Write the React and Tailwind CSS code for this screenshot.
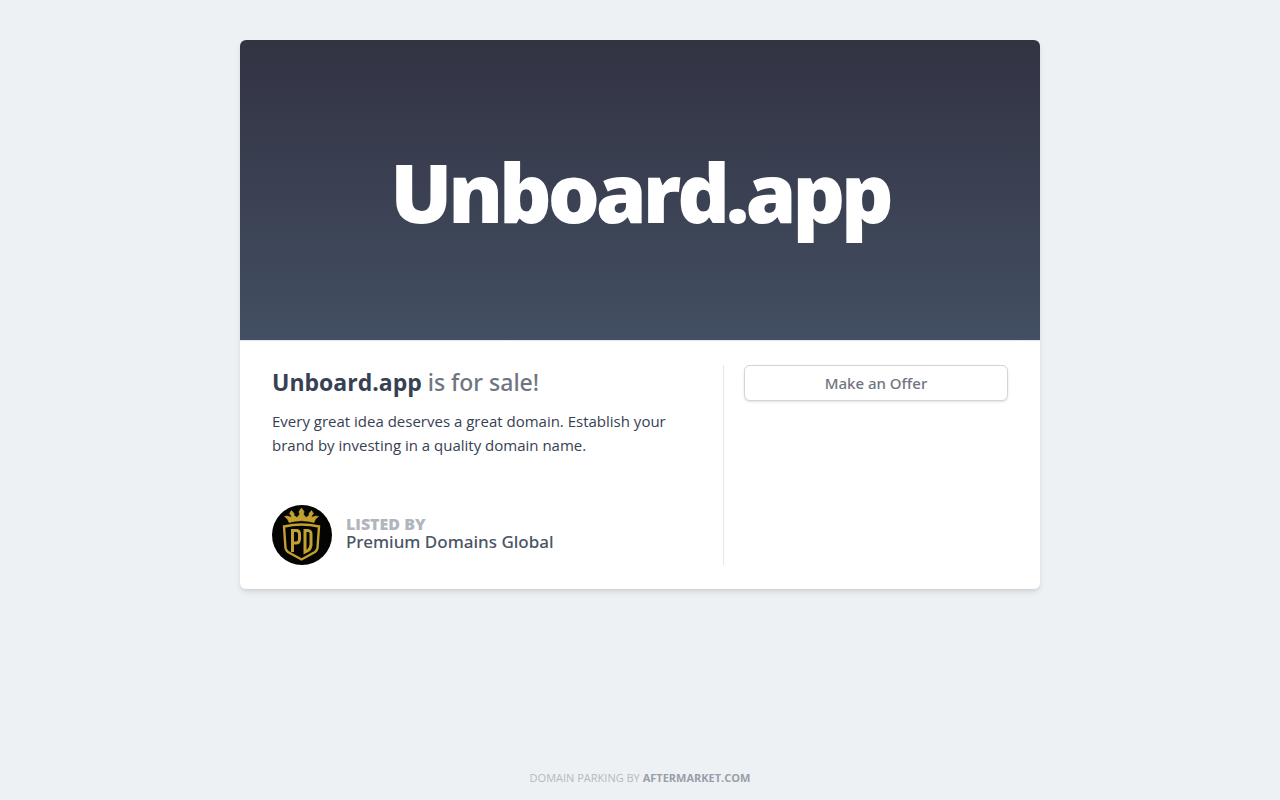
const SellerLogo = () => (
  <svg
    viewBox="0 0 60 60"
    className="w-15 h-15 rounded-full shrink-0"
    role="img"
    aria-label="Premium Domains Global"
  >
    <rect width="60" height="60" fill="#040403" />
    <path
      d="M17 17.500 L15.500 14 L12.500 11.500 L15.500 11 L19.500 12.500 L19 10.500 L17.500 8.500 L19.500 5.500 L22 8.500 L22 10.500 L25 12.500 L27.500 9.500 L27 6.500 L29.500 3 L32 6.500 L31.500 9.500 L34 12.500 L37 10.500 L37 8.500 L39.500 5.500 L41.500 8.500 L40 10.500 L39.500 12.500 L43.500 11 L46.500 11.500 L43.500 14 L42 17.500 Q29.500 14 17 17.500 Z"
      fill="#c2a12f"
      stroke="#c2a12f"
      strokeWidth="0.600"
      strokeLinejoin="round"
    />
    <g fill="none" stroke="#c2a12f">
      <path
        d="M12 21.500 Q29.500 17.500 47 21.500 L45.500 43 Q45 45.500 43 47 L29.500 54.500 L16 47 Q14 45.500 13.500 43 Z"
        strokeWidth="2.400"
      />
      <path
        d="M20.500 47 V25.500 H24 Q27.500 25.500 27.500 29 V34 Q27.500 38 24 38 H21"
        strokeWidth="3"
      />
      <path
        d="M33 25.500 H35.500 Q39.500 25.500 39 30 V40 Q38.500 44 36 45.500 L33 47 Z"
        strokeWidth="3"
      />
    </g>
  </svg>
);

const App = () => {
  return (
    <div className="flex flex-col items-center min-h-screen px-4 pt-10 bg-[#edf1f4] font-['Open_Sans','Noto_Sans',sans-serif]">
      <main className="w-full max-w-[800px] bg-white rounded-md shadow-md overflow-hidden">
        <div className="flex justify-center items-center h-[300px] bg-linear-to-b from-[#323343] to-[#434f63]">
          <h1 className="pt-0.5 text-[82px] leading-none font-extrabold tracking-tighter text-white">
            Unboard.app
          </h1>
        </div>
        <div className="flex px-8 py-6 border-t border-gray-200">
          <section className="flex-1 pr-5 border-r border-gray-200">
            <h2 className="text-[23px] leading-[34px] font-['Noto_Sans','Open_Sans',sans-serif] font-medium text-[#6f757f]">
              <strong className="font-['Open_Sans',sans-serif] font-bold text-gray-700">
                Unboard.app
              </strong>{" "}
              is for sale!
            </h2>
            <p className="mt-2.5 max-w-[420px] text-[15px] leading-6 text-gray-700">
              Every great idea deserves a great domain. Establish your brand by
              investing in a quality domain name.
            </p>
            <div className="flex items-center gap-3.5 mt-12">
              <SellerLogo />
              <div className="pb-0.5">
                <div className="text-[16px] leading-4 font-extrabold uppercase text-[#b0b5be]">
                  Listed by
                </div>
                <div className="text-[17px] leading-5 font-['Noto_Sans','Open_Sans',sans-serif] font-medium text-gray-600">
                  Premium Domains Global
                </div>
              </div>
            </div>
          </section>
          <aside className="w-[284px] pl-5">
            <button
              type="button"
              className="w-full h-9 text-[15px] font-['Noto_Sans','Open_Sans',sans-serif] font-medium text-[#6f757f] bg-white border border-gray-300 rounded-md shadow-sm"
            >
              Make an Offer
            </button>
          </aside>
        </div>
      </main>
      <footer className="mt-auto pb-3.5 text-[11px] leading-4 uppercase text-[#b4b9c0]">
        Domain parking by{" "}
        <a href="#" className="font-bold text-[#989fa9]">
          Aftermarket.com
        </a>
      </footer>
    </div>
  );
};

export default App;
